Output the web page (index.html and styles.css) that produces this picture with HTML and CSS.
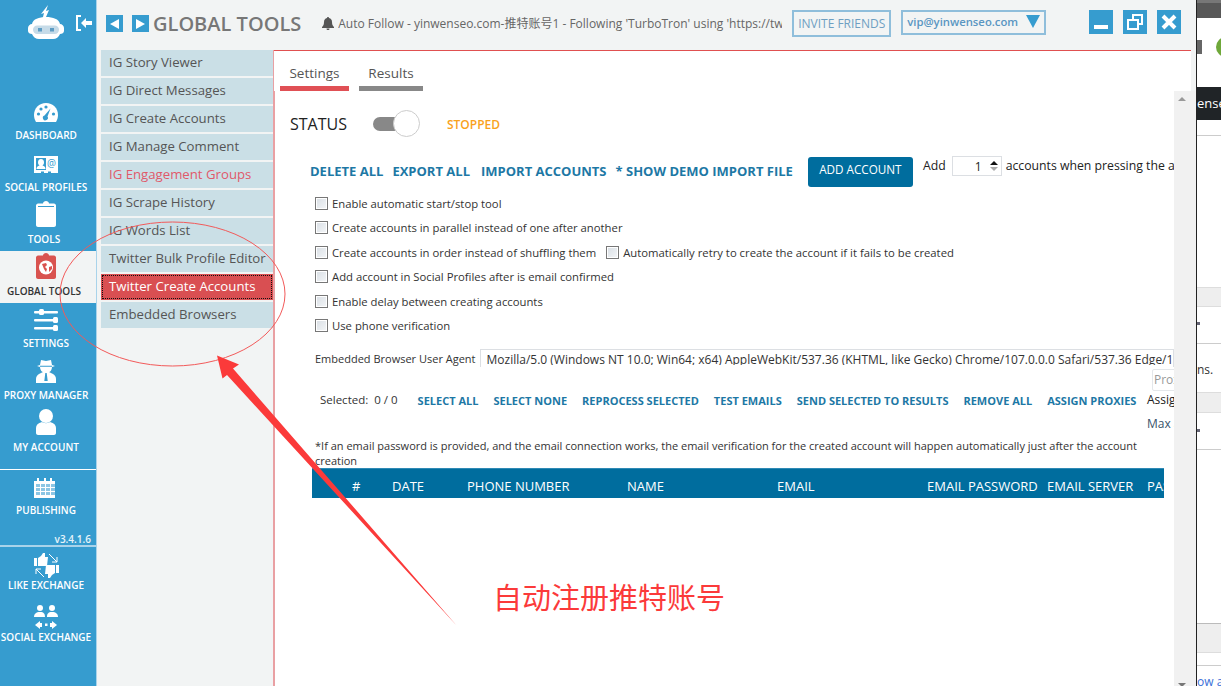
FILE: index.html
```html
<!DOCTYPE html>
<html lang="en">
<head>
<meta charset="utf-8">
<title>Global Tools</title>
<link rel="stylesheet" href="styles.css">
</head>
<body>
<div class="page">
  <div class="window">
    <aside class="sidebar">
      <div class="brand">
        <svg class="logo" width="36" height="34" viewBox="0 0 36 34"><path fill="#fff" d="M20 0L18 6L21 5L18 12H15L16 8L13 9ZM4 19C5 14 11 12 18 12S31 14 32 19C34 19 36 21 36 23V26C36 28 34 29 32 29C31 32 28 34 25 34H11C8 34 5 32 4 29C2 29 0 28 0 26V23C0 21 2 19 4 19Z"/><rect x="5" y="20.500" width="26" height="8.500" rx="4.200" fill="#c6dbe8"/><rect x="10" y="23" width="4" height="3.500" fill="#5e9dc4"/><rect x="22" y="23" width="4" height="3.500" fill="#5e9dc4"/></svg>
        <svg class="collapse" width="17" height="16" viewBox="0 0 17 16"><path fill="none" stroke="#fff" stroke-width="2" d="M5 1H1v14h4"/><path fill="#fff" d="M5 8l5-5v3h6v4h-6v3z"/></svg>
      </div>
      <nav class="nav">
        <a class="nav-item"><svg width="24" height="20" viewBox="0 0 24 20"><path fill="#fff" d="M12 0c7 0 12 5 12 12 0 3-1 5-2 7H2c-1-2-2-4-2-7C0 5 5 0 12 0z"/><g fill="#369ccf"><circle cx="4.500" cy="11" r="1.600"/><circle cx="7" cy="6" r="1.600"/><circle cx="12" cy="4" r="1.600"/><circle cx="19.500" cy="11" r="1.600"/><path d="M16.500 5.500l-3 8a2.500 2.500 0 1 1-3-1z"/></g></svg><span class="nav-label">DASHBOARD</span></a>
        <a class="nav-item"><svg width="24" height="19" viewBox="0 0 24 19"><path fill="#fff" d="M0 0h24v17h-7v-1.500h-3V17H10v-1.500H7V17H0z"/><path fill="#369ccf" d="M2 2h10v12H2z"/><path fill="#fff" d="M7 3c2 0 3 1.500 3 3.500S9 9 8.500 9.500c2 .5 3 1.500 3 3.500h-9c0-2 1-3 3-3.500C5 9 4 8.500 4 6.500S5 3 7 3z"/><text x="13" y="11" class="at-sign">@</text></svg><span class="nav-label">SOCIAL PROFILES</span></a>
        <a class="nav-item"><svg width="20" height="26" viewBox="0 0 20 26"><path fill="#fff" d="M7 2.500C7 1 8.500 0 10 0s3 1 3 2.500h5c1 0 2 1 2 2V24c0 1-1 2-2 2H2c-1 0-2-1-2-2V4.500c0-1 1-2 2-2z"/><path fill="#369ccf" d="M2 5h16v1H2z"/></svg><span class="nav-label nav-label-shift">TOOLS</span></a>
        <a class="nav-item nav-item-active"><svg width="20" height="26" viewBox="0 0 20 26"><path fill="#d9534f" d="M7 2.500C7 1 8.500 0 10 0s3 1 3 2.500h5c1 0 2 1 2 2V24c0 1-1 2-2 2H2c-1 0-2-1-2-2V4.500c0-1 1-2 2-2z"/><circle cx="10" cy="14.500" r="7" fill="#fff"/><path fill="#d9534f" d="M6 11l4-1 1 2-2 2 2 2-1 3-2-3zM13 14l3-1 0 3-3 3z"/></svg><span class="nav-label nav-label-shift">GLOBAL TOOLS</span></a>
        <a class="nav-item"><svg width="24" height="22" viewBox="0 0 24 22"><g fill="#fff"><rect y="2" width="24" height="2.500" rx="1"/><rect x="5" y="0" width="5" height="6" rx="1.500"/><rect y="10" width="24" height="2.500" rx="1"/><rect x="19" y="8" width="5" height="6" rx="1.500"/><rect y="18" width="24" height="2.500" rx="1"/><rect x="19" y="16" width="5" height="6" rx="1.500"/></g></svg><span class="nav-label">SETTINGS</span></a>
        <a class="nav-item"><svg width="20" height="24" viewBox="0 0 20 24"><path fill="#fff" d="M5 1l5 1 5-1 1 5 3 1-3 1c0 3-2 5-3 5l4 2c2 1 3 3 3 5v4H0v-4c0-2 1-4 3-5l4-2c-1 0-3-2-3-5L1 7l3-1z"/><path fill="#369ccf" d="M4 6.800h12v1H4zM9.300 14h1.400l1 8h-3.400z"/></svg><span class="nav-label">PROXY MANAGER</span></a>
        <a class="nav-item"><svg width="20" height="26" viewBox="0 0 20 26"><circle cx="10" cy="7" r="7" fill="#fff"/><path fill="#fff" d="M6 13c2 1.500 6 1.500 8 0 4 1 6 3 6 6v5c0 1-1 2-2 2H2c-1 0-2-1-2-2v-5c0-3 2-5 6-6z"/></svg><span class="nav-label">MY ACCOUNT</span></a>
      </nav>
      <div class="rule rule-white"></div>
      <a class="nav-item nav-item-publishing"><svg width="24" height="20" viewBox="0 0 24 20"><path fill="#fff" d="M0 3h3V0h2v3h5V0h2v3h4V0h2v3h3v17H0z"/><g fill="#8cc6e4"><rect x="2" y="6" width="4" height="3"/><rect x="7" y="6" width="4" height="3"/><rect x="12" y="6" width="4" height="3"/><rect x="17" y="6" width="4" height="3"/><rect x="2" y="10" width="4" height="3"/><rect x="7" y="10" width="4" height="3"/><rect x="12" y="10" width="4" height="3"/><rect x="17" y="10" width="4" height="3"/><rect x="2" y="14" width="4" height="3"/><rect x="7" y="14" width="4" height="3"/><rect x="12" y="14" width="4" height="3"/><rect x="17" y="14" width="4" height="3"/></g></svg><span class="nav-label">PUBLISHING</span></a>
      <div class="version">v3.4.1.6</div>
      <div class="rule rule-pale"></div>
      <a class="nav-item nav-item-exchange"><svg width="25" height="25" viewBox="0 0 25 25"><g fill="#fff"><path d="M0 5h3v8H0zM4 5l3-2 2-3h2v4h3l-1 9H4z"/><path d="M25 20h-3v-8h3zM21 20l-3 2-2 3h-2v-4h-3l1-9h9z"/></g><path fill="none" stroke="#fff" d="M15 1l8 8M23 4v5h-5M10 24l-8-8M2 21v-5h5"/></svg><span class="nav-label">LIKE EXCHANGE</span></a>
      <a class="nav-item nav-item-exchange"><svg width="24" height="24" viewBox="0 0 24 24"><g fill="#fff"><circle cx="6" cy="3" r="3"/><circle cx="18" cy="3" r="3"/><path d="M0 12c0-3 2-5 6-5s5 2 5 5zM13 12c0-3 1-5 5-5s6 2 6 5z"/><path d="M1 20l5-4v2h2v4H6v2zM23 20l-5-4v2h-2v4h2v2z"/><rect x="11" y="18.500" width="2.500" height="2.500"/></g></svg><span class="nav-label">SOCIAL EXCHANGE</span></a>
    </aside>

    <div class="main">
      <header class="topbar">
        <button class="arrow-btn"><span class="tri tri-left"></span></button>
        <button class="arrow-btn"><span class="tri tri-right"></span></button>
        <h1 class="title">GLOBAL TOOLS</h1>
        <svg class="bell" width="12" height="13" viewBox="0 0 12 13"><path fill="#555" d="M6 0c.7 0 1 .5 1 1 2 .5 3 2 3 4 0 3 1 4 2 5v1H0v-1c1-1 2-2 2-5 0-2 1-3.500 3-4 0-.5.300-1 1-1zM4.500 11.500h3C7.500 12.500 7 13 6 13s-1.500-.5-1.500-1.500z"/></svg>
        <div class="ticker">Auto Follow - yinwenseo.com-推特账号1 - Following 'TurboTron' using 'https://twitter.com/TurboTron'</div>
        <button class="invite">INVITE FRIENDS</button>
        <div class="account"><span>vip@yinwenseo.com</span><span class="account-caret"></span></div>
        <div class="win-btns">
          <button class="win-btn"><svg width="24" height="24" viewBox="0 0 24 24"><rect x="5" y="15" width="14" height="4" fill="#fff"/></svg></button>
          <button class="win-btn"><svg width="24" height="24" viewBox="0 0 24 24"><path fill="none" stroke="#fff" stroke-width="2" d="M5 10h10v9H5zM10 10V5h9v9h-4"/></svg></button>
          <button class="win-btn"><svg width="24" height="24" viewBox="0 0 24 24"><path fill="none" stroke="#fff" stroke-width="4" d="M6 6l12 12M18 6L6 18"/></svg></button>
        </div>
      </header>

      <div class="workspace">
        <ul class="tool-list">
          <li class="tool">IG Story Viewer</li>
          <li class="tool">IG Direct Messages</li>
          <li class="tool">IG Create Accounts</li>
          <li class="tool">IG Manage Comment</li>
          <li class="tool tool-alert">IG Engagement Groups</li>
          <li class="tool">IG Scrape History</li>
          <li class="tool">IG Words List</li>
          <li class="tool">Twitter Bulk Profile Editor</li>
          <li class="tool tool-active">Twitter Create Accounts</li>
          <li class="tool">Embedded Browsers</li>
        </ul>

        <section class="panel">
          <div class="tabs">
            <div class="tab tab-on">Settings</div>
            <div class="tab">Results</div>
          </div>
          <div class="panel-body">
            <div class="scroll">
              <div class="status-row">
                <span class="status-label">STATUS</span>
                <span class="toggle"><span class="toggle-knob"></span></span>
                <span class="status-value">STOPPED</span>
              </div>
              <div class="action-row">
                <a class="action action-first">DELETE ALL</a>
                <a class="action action-second">EXPORT ALL</a>
                <a class="action action-third">IMPORT ACCOUNTS</a>
                <a class="action">* SHOW DEMO IMPORT FILE</a>
                <button class="primary">ADD ACCOUNT</button>
                <span class="add-label">Add</span>
                <span class="spin"><span class="spin-value">1</span><span class="spin-arrows"><span class="spin-up"></span><span class="spin-down"></span></span></span>
                <span class="add-label add-tail">accounts when pressing the add account button</span>
              </div>
              <div class="options">
                <label class="option"><span class="check"></span>Enable automatic start/stop tool</label>
                <label class="option"><span class="check"></span>Create accounts in parallel instead of one after another</label>
                <label class="option"><span class="check"></span>Create accounts in order instead of shuffling them<span class="check check-second"></span>Automatically retry to create the account if it fails to be created</label>
                <label class="option"><span class="check"></span>Add account in Social Profiles after is email confirmed</label>
                <label class="option"><span class="check"></span>Enable delay between creating accounts</label>
                <label class="option"><span class="check"></span>Use phone verification</label>
              </div>
              <div class="agent-row">
                <span class="agent-label">Embedded Browser User Agent</span>
                <div class="agent-input"><span class="agent-value">Mozilla/5.0 (Windows NT 10.0; Win64; x64) AppleWebKit/537.36 (KHTML, like Gecko) Chrome/107.0.0.0 Safari/537.36 Edge/107.0.1418.35</span></div>
              </div>
              <div class="select-row">
                <span class="selected">Selected:&nbsp; 0 / 0</span>
                <a class="mini">SELECT ALL</a>
                <a class="mini">SELECT NONE</a>
                <a class="mini">REPROCESS SELECTED</a>
                <a class="mini">TEST EMAILS</a>
                <a class="mini">SEND SELECTED TO RESULTS</a>
                <a class="mini">REMOVE ALL</a>
                <a class="mini">ASSIGN PROXIES</a>
              </div>
              <p class="note">*If an email password is provided, and the email connection works, the email verification for the created account will happen automatically just after the account creation</p>
              <div class="table-head">
                <span class="col col-num">#</span>
                <span class="col col-date">DATE</span>
                <span class="col col-phone">PHONE NUMBER</span>
                <span class="col col-name">NAME</span>
                <span class="col col-email">EMAIL</span>
                <span class="col col-pass">EMAIL PASSWORD</span>
                <span class="col col-server">EMAIL SERVER</span>
                <span class="col col-last">PASSWORD</span>
              </div>
              <div class="proxy-pop">
                <div class="proxy-input">Proxies</div>
                <div class="proxy-line">Assign</div>
                <div class="proxy-line proxy-max">Max accounts</div>
              </div>
            </div>
            <div class="scrollbar"><span class="bar-up"></span><span class="bar-down"></span></div>
          </div>
        </section>
      </div>
    </div>
  </div>

  <div class="behind">
    <div class="behind-chrome"></div>
    <div class="behind-head"><span class="behind-block"></span><span class="behind-dot"></span></div>
    <div class="behind-black">ense</div>
    <div class="behind-line behind-line-a"></div>
    <div class="behind-band behind-band-a"></div>
    <div class="behind-tick behind-tick-a"></div>
    <div class="behind-line behind-line-b"></div>
    <div class="behind-text">ns.</div>
    <div class="behind-band behind-band-b"></div>
    <div class="behind-tick behind-tick-b"></div>
    <div class="behind-line behind-line-c"></div>
    <div class="behind-band behind-band-c"></div>
    <div class="behind-line behind-line-d"></div>
    <div class="behind-link">ow a</div>
  </div>

  <svg class="annotation" width="1221" height="686" viewBox="0 0 1221 686">
    <ellipse cx="172.500" cy="294" rx="112.500" ry="72" fill="none" stroke="#f25a5a" stroke-width="1"/>
    <path fill="#fb3a3a" d="M217 355.500L239 364.500L233 368.500L457 626L227 375L222.500 378.500Z"/>
  </svg>
  <div class="annotation-text">自动注册推特账号</div>
</div>
</body>
</html>
```

FILE: styles.css
```css
* { box-sizing: border-box; }
html, body { margin: 0; padding: 0; }
body { font-family: "Open Sans", "Noto Sans", sans-serif; color: #333; background: #fff; }
button { font-family: inherit; padding: 0; cursor: pointer; }

.page { position: relative; width: 1221px; height: 686px; overflow: hidden; display: flex; }
.window { width: 1196px; height: 686px; display: flex; flex: none; }

/* sidebar */
.sidebar { width: 97px; flex: none; background: #369ccf; border-right: 1px solid #a9d3ea; display: flex; flex-direction: column; }
.brand { height: 95px; flex: none; display: flex; align-items: flex-start; padding: 5px 0 0 28px; }
.logo { flex: none; }
.collapse { margin: 10px 0 0 12px; flex: none; }
.nav { display: flex; flex-direction: column; flex: none; }
.nav-item { height: 52px; display: flex; flex-direction: column; align-items: center; justify-content: flex-end; padding: 0 4px 5px 0; color: #fff; }
.nav-item svg { flex: none; }
.nav-label { font-size: 10px; font-weight: 600; line-height: 14px; margin-top: 5px; white-space: nowrap; }
.nav-label-shift { margin-right: 4px; }
.nav-item-active { background: #f2f4f4; color: #333; }
.at-sign { font-family: "Open Sans", sans-serif; font-size: 10px; fill: #369ccf; }
.rule { flex: none; }
.rule-white { background: #fff; margin-top: 10px; height: 1px; }
.rule-pale { background: #a9d3ea; height: 2px; }
.nav-item-publishing { height: 47px; padding-bottom: 0; flex: none; }
.version { font-size: 10px; font-weight: 600; color: #e8f4fa; text-align: right; padding-right: 5px; line-height: 13px; margin: 16px 0 -1px; flex: none; }
.nav-item-exchange { height: 52px; flex: none; padding: 6px 4px 0 0; justify-content: flex-start; }
.nav-item-exchange .nav-label { margin-top: 0; }
.nav-item-exchange + .nav-item-exchange .nav-label { margin-top: 1px; }

/* main */
.main { flex: 1; min-width: 0; display: flex; flex-direction: column; background: #f2f4f4; }
.topbar { height: 50px; flex: none; display: flex; align-items: flex-start; padding: 15px 0 0 9px; }
.arrow-btn { width: 17px; height: 17px; margin-right: 9px; background: #369ccf; border: 0; display: flex; align-items: center; justify-content: center; flex: none; }
.tri { width: 0; height: 0; border-top: 5px solid transparent; border-bottom: 5px solid transparent; }
.tri-left { border-right: 9px solid #fff; }
.tri-right { border-left: 9px solid #fff; }
.title { margin: -3px 0 0 -5px; font-size: 20px; line-height: 24px; font-weight: 600; color: #777; white-space: nowrap; flex: none; }
.bell { margin: 2px 0 0 21px; flex: none; }
.ticker { width: 444px; flex: none; margin: 1px 0 0 4px; overflow: hidden; white-space: nowrap; font-size: 12px; line-height: 16px; color: #666; font-family: "Open Sans", "Noto Sans CJK SC", sans-serif; }
.invite { width: 99px; height: 27px; margin: -5px 0 0 10px; flex: none; background: transparent; border: 2px solid #8fbedb; font-size: 12px; color: #6e9fc2; white-space: nowrap; }
.account { width: 145px; height: 25px; margin: -5px 0 0 10px; flex: none; border: 2px solid #8fbedb; display: flex; align-items: center; padding: 0 4px 2px 4px; font-size: 11.300px; font-weight: 600; color: #5a96c2; white-space: nowrap; }
.account-caret { margin-left: auto; width: 0; height: 0; border-left: 7px solid transparent; border-right: 7px solid transparent; border-top: 13px solid #369ccf; }
.win-btns { display: flex; gap: 10px; margin: -5px 0 0 43px; flex: none; }
.win-btn { width: 24px; height: 24px; background: #369ccf; border: 0; display: block; }
.win-btn svg { display: block; }

.workspace { flex: 1; min-height: 0; display: flex; }
.tool-list { width: 177px; flex: none; list-style: none; margin: 0; padding: 0 0 0 4px; display: flex; flex-direction: column; gap: 2px; }
.tool { height: 26px; width: 172px; background: #cadfe6; padding-left: 8px; font-size: 13.200px; line-height: 24px; color: #555; white-space: nowrap; }
.tool-alert { color: #e0596a; }
.tool-active { background: #d94f52; color: #fff; outline: 1px dotted #111; outline-offset: -2px; }

.panel { flex: 1; min-width: 0; margin-left: -1px; border-left: 2px solid #e9a0a3; display: flex; flex-direction: column; }
.tabs { height: 41px; flex: none; margin: 0 5px 0 -1px; background: #fff; border-top: 1px solid #e05050; display: flex; gap: 10px; padding: 11px 0 0 6px; }
.tab { height: 29px; width: 64px; border-bottom: 5px solid #888; text-align: center; font-size: 13.500px; line-height: 22px; color: #555; }
.tab-on { width: 69px; border-bottom-color: #e05055; }
.panel-body { flex: 1; min-height: 0; display: flex; }
.scroll { position: relative; flex: 1; min-width: 0; background: #fff; overflow: hidden; color: #333; }
.scrollbar { width: 22px; flex: none; background: #f1f1f1; display: flex; flex-direction: column; justify-content: space-between; align-items: center; padding: 6px 6px 0 0; }
.bar-up, .bar-down { width: 0; height: 0; border-left: 4px solid transparent; border-right: 4px solid transparent; }
.bar-up { border-bottom: 4px solid #999; }
.bar-down { border-top: 4px solid #777; margin-bottom: -1px; }

.status-row { height: 28px; margin-top: 19px; padding-left: 15px; display: flex; align-items: center; }
.status-label { font-size: 16px; color: #222; }
.toggle { position: relative; width: 28px; height: 14px; margin-left: 26px; background: #888; border-radius: 7px; flex: none; }
.toggle-knob { position: absolute; left: 20px; top: -7px; width: 27px; height: 27px; border-radius: 50%; background: #fff; border: 1px solid #ccc; }
.status-value { margin-left: 46px; font-size: 12px; font-weight: 600; color: #f9a11b; }

.action-row { height: 30px; margin-top: 19px; padding-left: 35px; display: flex; align-items: center; white-space: nowrap; }
.action { font-size: 13px; font-weight: 700; color: #1d78a5; margin: 0 10px 2px 0; }
.action-first { margin-right: 9px; }
.action-second { margin-right: 11px; }
.action-third { margin-right: 9px; }
.primary { width: 105px; height: 30px; margin-left: 5px; background: #006d9e; color: #fff; border: 0; border-radius: 3px; font-size: 11.700px; padding-bottom: 6px; flex: none; }
.add-label { font-size: 12.250px; margin: -13px 0 0 10px; color: #222; }
.add-tail { margin-left: 4px; }
.spin { width: 50px; height: 20px; margin: -12px 0 0 6px; flex: none; border: 1px solid #dcdfe3; display: flex; align-items: center; justify-content: flex-end; padding-right: 3px; font-size: 12px; color: #222; }
.spin-value { margin-right: 8px; }
.spin-arrows { display: flex; flex-direction: column; gap: 2px; }
.spin-up, .spin-down { width: 0; height: 0; border-left: 4px solid transparent; border-right: 4px solid transparent; }
.spin-up { border-bottom: 4px solid #111; }
.spin-down { border-top: 4px solid #aaa; }

.options { margin-top: 4.400px; padding-left: 40px; }
.option { height: 24.400px; display: flex; align-items: center; font-size: 11.300px; color: #333; white-space: nowrap; }
.check { width: 13px; height: 13px; flex: none; border: 1px solid #777; background: linear-gradient(135deg, #d8dee4, #f4f6f8); box-shadow: inset 0 0 0 1px #fff; margin-right: 4px; }
.check-second { margin-left: 10px; }

.agent-row { height: 18px; margin-top: 11.600px; padding-left: 40px; display: flex; white-space: nowrap; }
.agent-label { font-size: 11px; line-height: 20px; color: #333; }
.agent-input { margin-left: 4px; flex: 1; min-width: 0; overflow: hidden; border: 1px solid #dcdfe3; border-bottom: 0; padding-left: 6px; color: #333; }
.agent-value { display: block; height: 15px; overflow: hidden; font-size: 12px; line-height: 20px; }

.select-row { height: 20px; margin-top: 23px; padding-left: 45px; display: flex; align-items: center; white-space: nowrap; }
.selected { font-size: 11.500px; margin-right: 20px; color: #333; position: relative; top: -1px; }
.mini { font-size: 11px; font-weight: 700; color: #1d78a5; margin: 0 15px 0 0; }

.note { margin: 28px 0 0 40px; width: 840px; font-size: 11px; line-height: 15px; color: #333; }
.table-head { position: relative; height: 30px; margin: 0 0 0 37px; width: 852px; background: #006d9e; border-top: 1px solid #2f8ab5; color: #fff; font-size: 13px; overflow: hidden; white-space: nowrap; }
.col { position: absolute; top: 8px; }
.col-num { left: 40px; }
.col-date { left: 80px; }
.col-phone { left: 155px; }
.col-name { left: 315px; }
.col-email { left: 465px; }
.col-pass { left: 615px; }
.col-server { left: 735px; }
.col-last { left: 835px; }

.proxy-pop { position: absolute; left: 872px; top: 278px; width: 60px; white-space: nowrap; font-size: 12px; }
.proxy-input { margin-left: 5px; height: 22px; border: 1px solid #e4e7ea; border-radius: 2px; padding-left: 1px; line-height: 20px; color: #999; background: #fff; }
.proxy-line { margin-top: -2px; line-height: 22px; color: #222; }
.proxy-max { margin-top: 2px; color: #39546b; }

/* page behind */
.behind { width: 25px; flex: none; height: 686px; border-left: 1px solid #222; background: #fff; overflow: hidden; display: flex; flex-direction: column; }
.behind-chrome { height: 18px; flex: none; background: #585858; border-top: 3px solid #777; }
.behind-head { height: 69px; flex: none; display: flex; align-items: center; }
.behind-block { width: 5px; height: 14px; background: #666; margin-top: -12px; flex: none; }
.behind-dot { width: 22px; height: 20px; flex: none; margin: -12px 0 0 14px; border-radius: 10px; background: #6fa83a; }
.behind-black { height: 33px; flex: none; background: #202427; color: #fff; font-size: 13px; line-height: 33px; white-space: nowrap; }
.behind-line { height: 1px; background: #ccc; flex: none; }
.behind-line-a { margin-top: 15px; }
.behind-band { flex: none; background: #eee; border-top: 1px solid #ddd; border-bottom: 1px solid #ddd; }
.behind-band-a { height: 20px; margin-top: 151px; }
.behind-tick { width: 3px; height: 3px; background: #667; flex: none; }
.behind-tick-a { margin-top: 15px; }
.behind-line-b { margin-top: 18px; }
.behind-text { height: 16px; margin-top: 18px; font-size: 12px; line-height: 16px; color: #333; flex: none; white-space: nowrap; }
.behind-band-b { height: 21px; margin-top: 14px; }
.behind-tick-b { margin-top: 16px; }
.behind-line-c { margin-top: 17px; }
.behind-band-c { height: 30px; margin-top: 173px; border-top: 1px solid #bbb; }
.behind-line-d { margin-top: 12px; }
.behind-link { font-size: 12px; line-height: 14px; color: #3a6fd8; white-space: nowrap; margin-top: 9px; flex: none; }

/* annotation drawn on top */
.annotation { position: absolute; left: 0; top: 0; pointer-events: none; }
.annotation-text { position: absolute; left: 493px; top: 575px; font-family: "Noto Sans CJK SC", sans-serif; font-size: 29px; line-height: 42px; color: #fb3a3a; white-space: nowrap; }
```
